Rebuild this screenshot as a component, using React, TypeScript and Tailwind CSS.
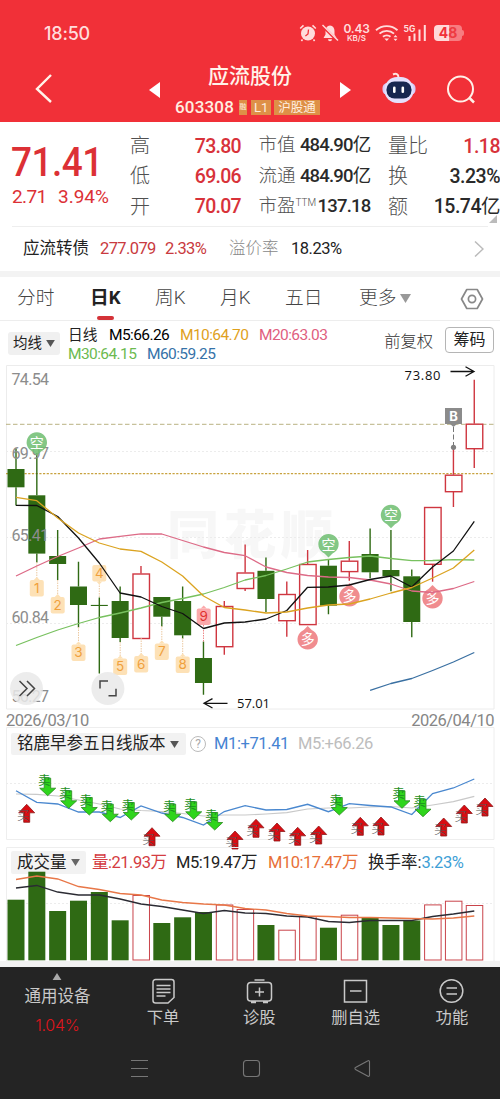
import React from 'react';
import clsx from 'clsx';

const COL = 20.83;
const cx = (i: number) => 16 + COL * i;

interface Candle {
  up?: boolean;
  top: number;
  bottom: number;
  high: number;
  low: number;
  vol: number;
}

const candles: Candle[] = [
  { top: 469, bottom: 487.3, high: 448.5, low: 505.5, vol: 898.7 },
  { top: 495.3, bottom: 553.6, high: 453, low: 562.6, vol: 870.7 },
  { top: 556, bottom: 564, high: 530, low: 580, vol: 910 },
  { top: 586.5, bottom: 605, high: 561.7, low: 627.5, vol: 899.7 },
  { top: 604.9, bottom: 606, high: 597.5, low: 673.5, vol: 891 },
  { top: 601, bottom: 638, high: 586.5, low: 642, vol: 919.3 },
  { up: true, top: 573.5, bottom: 638.5, high: 566, low: 638.5, vol: 894 },
  { top: 597, bottom: 616.7, high: 597, low: 626.5, vol: 922 },
  { top: 601, bottom: 635.3, high: 586.5, low: 638.7, vol: 916.3 },
  { top: 658, bottom: 683, high: 641.5, low: 694.7, vol: 911 },
  { up: true, top: 606, bottom: 646.7, high: 601, low: 654.7, vol: 903.5 },
  { up: true, top: 572.5, bottom: 588.5, high: 544.5, low: 591, vol: 908 },
  { top: 570.8, bottom: 599, high: 557.5, low: 612, vol: 924 },
  { up: true, top: 594, bottom: 620.7, high: 581.5, low: 636.7, vol: 928.7 },
  { up: true, top: 564, bottom: 624.6, high: 550, low: 624.6, vol: 915 },
  { top: 565.7, bottom: 605.7, high: 560, low: 614.3, vol: 926.7 },
  { up: true, top: 560.7, bottom: 571.6, high: 541, low: 580.7, vol: 913.7 },
  { top: 554, bottom: 572.3, high: 528.5, low: 578.3, vol: 916.7 },
  { top: 570, bottom: 576.3, high: 530, low: 591.3, vol: 924 },
  { top: 576.3, bottom: 622, high: 569.5, low: 637.3, vol: 919.5 },
  { up: true, top: 507, bottom: 564.3, high: 507, low: 581.7, vol: 903.4 },
  { up: true, top: 474.7, bottom: 491.7, high: 447.5, low: 507, vol: 899.7 },
  { up: true, top: 423.7, bottom: 448.7, high: 379.7, low: 468, vol: 904 },
];

const ma5 = [505.3, 505.5, 516.5, 538, 563, 593, 597, 606.5, 613.5, 628.5, 623, 622, 619, 610.5, 587.3, 587, 585, 579.5, 576, 587, 567, 551, 521.3];
const ma10 = [497.3, 500.7, 518, 533, 543, 549, 551.3, 562, 576, 596, 607.5, 610, 613, 612, 608, 605, 604, 599, 593, 587.5, 578, 568, 550];
const ma20 = [576, 566, 556.5, 548, 539, 536.3, 533.8, 534, 540.5, 547, 552.5, 555.7, 567, 572.5, 575.5, 577, 577.5, 580, 584, 591, 592.5, 588.5, 581.5];
const ma30 = [645.5, 637.5, 630, 623.5, 617.5, 613, 608, 602.5, 598.5, 594, 587.5, 580, 575.5, 569, 562, 559.5, 557.5, 556, 558.5, 560.7, 560.5, 559.7, 560];
const ma60 = [690.3, 683.5, 678.5, 670.5, 662, 652.5];

const signalM1 = [790.7, 802.3, 804, 812, 812, 817.5, 806, 813, 817.5, 825, 811.5, 805.7, 810, 809.5, 804.3, 811.7, 803.7, 805.5, 807, 814.5, 793.5, 788, 779];
const signalM5 = [794, 794.3, 796, 800, 804, 809, 810.5, 811.5, 813.5, 816, 815, 815, 814, 812.7, 809, 808, 808, 807, 806.5, 808, 805, 801.7, 796.3];

const volM5 = [887, 884.5, 891, 894, 894, 898, 903, 905.5, 909, 912.5, 909.5, 912, 912.5, 915, 916, 920.5, 921.5, 919.5, 919.5, 919.5, 915.5, 913, 910];
const volM10 = [878.5, 875, 878, 885.5, 888.5, 892.5, 894, 899, 901.5, 903, 904, 907.5, 909, 912.5, 915, 915.5, 916.5, 916.5, 917, 917.5, 918, 917, 915];

const sells = [[47.7, 795.7], [68.7, 808.3], [89.3, 815], [110.3, 821.7], [131.3, 820], [172.7, 821.7], [193.7, 819.3], [214.7, 830], [339.3, 815], [402, 808.3], [423, 816.7]];
const buys = [[26.7, 804.3], [152, 827.7], [235, 831], [256, 819.3], [277, 823], [297.7, 827.3], [318.7, 826], [360.3, 817.3], [381, 817], [443.7, 818], [464.3, 805], [485, 798]];

const counts = [
  { n: 1, x: 36.8, y: 587.5, from: 562 },
  { n: 2, x: 57.7, y: 604.5, from: 580 },
  { n: 3, x: 78.5, y: 652, from: 627 },
  { n: 4, x: 99.3, y: 572.5, from: 597, down: true },
  { n: 5, x: 120.2, y: 666, from: 642 },
  { n: 6, x: 141.2, y: 663.5, from: 638 },
  { n: 7, x: 161.8, y: 651, from: 626 },
  { n: 8, x: 182.7, y: 664, from: 638 },
];

const line = (ys: number[], start = 0) => ys.map((y, i) => `${cx(i + start).toFixed(1)},${y}`).join(' ');

const Caret = ({ className }: { className?: string }) => (
  <svg viewBox="0 0 10 8" className={clsx('shrink-0', className)} fill="currentColor">
    <path d="M0 0h10L5 8z" />
  </svg>
);

const StatusBar = () => (
  <div className="flex h-[66px] items-center pl-[44px] pr-[36px] text-[#ffdcdc] font-['Inter',sans-serif]">
    <span className="text-[18px] font-medium tracking-[-0.2px]">18:50</span>
    <div className="ml-auto flex items-center">
      <svg viewBox="0 0 18 18" className="h-[18px] w-[18px]">
        <circle cx="9" cy="9.5" r="7" fill="currentColor" />
        <path d="M1.2 4.5 4.5 1.4M16.8 4.5 13.5 1.4M3.5 15.5 2.4 17M14.5 15.5l1.1 1.5" stroke="currentColor" strokeWidth="1.6" />
        <path d="M9.5 5.5 9 10l-2.6 2" stroke="#f13038" strokeWidth="1.3" fill="none" />
      </svg>
      <svg viewBox="0 0 18 18" className="ml-[4px] h-[18px] w-[18px]">
        <path d="M9 1.5c-3 .3-4.5 2.7-4.5 5.5v3.5L2.5 14h13l-2-3.5V7C13.5 4 12 1.8 9 1.5zM7 15.2h4a2 2 0 0 1-4 0z" fill="currentColor" />
        <path d="M1 1.5 16.5 17" stroke="#f13038" strokeWidth="2.6" />
        <path d="M1.5 1 17 16.5" stroke="currentColor" strokeWidth="1.4" />
      </svg>
      <div className="ml-[4px] w-[27px] text-center font-semibold">
        <div className="text-[12px] leading-[10px] tracking-[-0.2px]">0.43</div>
        <div className="text-[8px] leading-[8px]">KB/S</div>
      </div>
      <svg viewBox="0 0 24 18" className="ml-[5px] h-[18px] w-[24px]" fill="none" stroke="currentColor" strokeWidth="1.9">
        <path d="M1 6.2c6-5.500 15.500-5.500 21.500 0M4.500 9.600c4-3.700 10.500-3.700 14.500 0M8 12.800c2-1.900 5.500-1.900 7.500 0" />
        <path d="M9.300 14.500h4.900L11.750 17z" fill="currentColor" stroke="none" />
        <path d="M18.500 13.200h4L20.500 11zM18.500 14.700h4l-2 2.200z" fill="currentColor" stroke="none" />
      </svg>
      <svg viewBox="0 0 23 18" className="ml-[5px] h-[18px] w-[23px] overflow-visible" stroke="currentColor" strokeWidth="2">
        <text x="-0.5" y="7.5" className="text-[8.500px] font-bold" fill="currentColor" stroke="none">5G</text>
        <path d="M5.500 17v-5M10.500 17V9.500M15.500 17V5.500M20.800 17V1" />
      </svg>
      <div className="ml-[7px] flex items-center">
        <div className="flex h-[16px] w-[28px] items-center justify-center rounded-[4px] bg-[linear-gradient(90deg,#ffd9d9_52%,#f77c80_52%)] text-[14px] font-bold leading-none">
          <span className="text-[#f13038]">4</span>
          <span className="text-[#ee3b42]">8</span>
        </div>
        <div className="h-[6px] w-[2px] rounded-r bg-[#f77c80]" />
      </div>
    </div>
  </div>
);

const TitleBar = () => (
  <div className="flex h-[56px] items-center pl-[35px] text-white">
    <svg viewBox="0 0 18 30" className="mt-[-13px] h-[30px] w-[18px]" fill="none" stroke="#fff4ea" strokeWidth="2.4">
      <path d="M16 2 2 16l14 13" />
    </svg>
    <svg viewBox="0 0 11 16" className="ml-[96px] mt-[-9px] h-[16px] w-[11px]" fill="#fff">
      <path d="M11 0v16L0 8z" />
    </svg>
    <div className="ml-[10px] flex w-[158px] flex-col items-center">
      <div className="pb-[9px] pl-[2px] text-[21px] font-medium leading-[19px] text-[#fff3ea]">应流股份</div>
      <div className="-mt-px mr-[3px] flex h-[28px] items-center whitespace-nowrap text-[#ffeee0]">
        <span className="text-[17px] font-medium tracking-[0.2px]">603308</span>
        <span className="ml-[5px] h-[15px] w-[8px] bg-[#de9047] text-center text-[7px] leading-[15px]">融</span>
        <span className="ml-[4px] h-[15px] w-[20px] bg-[#de9047] text-center text-[13px] leading-[15px]">L1</span>
        <span className="ml-[3px] h-[15px] w-[46px] bg-[#de9047] text-center text-[12.500px] leading-[15px]">沪股通</span>
      </div>
    </div>
    <svg viewBox="0 0 11 16" className="ml-[12px] mt-[-9px] h-[16px] w-[11px]" fill="#fff">
      <path d="M0 0v16l11-8z" />
    </svg>
    <svg viewBox="0 0 34 32" className="ml-[31px] mt-[-13px] h-[32px] w-[34px]">
      <path d="M11 2.500c3-1.500 5.500-.500 5.500 3" fill="none" stroke="#ffe3df" strokeWidth="2" />
      <rect x="0.500" y="11" width="33" height="12" rx="5" fill="#d9c9f7" />
      <rect x="2.500" y="5" width="29" height="26" rx="12.500" fill="#e4e0fc" />
      <rect x="4.500" y="9.500" width="25" height="17" rx="8" fill="#17264f" />
      <rect x="11" y="14.500" width="2.600" height="6.500" rx="1.300" fill="#fff" />
      <rect x="19.500" y="14.500" width="2.600" height="6.500" rx="1.300" fill="#fff" />
    </svg>
    <svg viewBox="0 0 30 30" className="ml-[30px] mt-[-8px] h-[30px] w-[30px]" fill="none" stroke="#fff1e8" strokeWidth="2">
      <circle cx="14.500" cy="14" r="12.500" />
      <path d="m23 22.500 5 5" strokeWidth="2.500" />
    </svg>
  </div>
);

const quotes = [
  [
    { label: '高', value: '73.80', red: true },
    { label: '低', value: '69.06', red: true },
    { label: '开', value: '70.07', red: true },
  ],
  [
    { label: '市值', value: '484.90', unit: '亿' },
    { label: '流通', value: '484.90', unit: '亿' },
    { label: '市盈', sup: 'TTM', value: '137.18' },
  ],
  [
    { label: '量比', value: '1.18', red: true },
    { label: '换', value: '3.23%' },
    { label: '额', value: '15.74', unit: '亿' },
  ],
];

const widths = ['w-[111px] text-[20px]', 'w-[112px] text-[18.5px]', 'w-[112px] text-[20px]'];
const valueSizes = ['text-[19.5px] tracking-[-0.7px]', 'text-[18.5px] tracking-[-0.8px]', 'text-[19.5px] tracking-[-0.5px]'];

const QuotePanel = () => (
  <div className="relative flex h-[104px] pt-[9px]">
    <div className="w-[130px] pl-[11px] text-[#dc3035]">
      <div className="origin-left scale-x-[0.9] whitespace-nowrap pt-[11px] text-[41px] font-medium leading-[40px] tracking-[-0.5px]">71.41</div>
      <div className="flex pl-px pt-[2px] text-[19px] leading-[26px]">
        <span className="w-[46px] tracking-[-0.6px]">2.71</span>
        <span>3.94%</span>
      </div>
    </div>
    <div className="flex gap-[17.500px]">
      {quotes.map((col, c) => (
        <div key={c} className={clsx('shrink-0', widths[c])}>
          {col.map((q) => (
            <div key={q.label} className="flex h-[30.300px] items-center justify-between whitespace-nowrap">
              <span className="flex font-light text-[#505050]">
                {q.label}
                {'sup' in q && <span className="mt-[3px] text-[10px] leading-[14px]">{q.sup}</span>}
              </span>
              <span className={clsx('font-medium', valueSizes[c], 'red' in q ? 'text-[#d8323a]' : 'text-[#2a2a2a]')}>
                {q.value}
                {'unit' in q && <span className="font-normal">{q.unit}</span>}
              </span>
            </div>
          ))}
        </div>
      ))}
    </div>
    <svg viewBox="0 0 8 8" className="absolute bottom-[3px] right-[3px] h-2 w-2" fill="#bbb">
      <path d="M8 0v8H0z" />
    </svg>
  </div>
);

const BondRow = () => (
  <div className="ml-[12px] mr-[12px] flex h-[45px] items-center border-t border-[#eee] pl-[11px] text-[16.500px]">
    <span className="w-[77px] text-[#222]">应流转债</span>
    <span className="w-[65px] tracking-[-0.600px] text-[#c93a40]">277.079</span>
    <span className="w-[64px] tracking-[-0.600px] text-[#c93a40]">2.33%</span>
    <span className="w-[62px] font-light text-[#888]">溢价率</span>
    <span className="tracking-[-0.500px] text-[#222]">18.23%</span>
    <svg viewBox="0 0 10 16" className="ml-auto mr-[4px] h-[16px] w-[10px]" fill="none" stroke="#bbb" strokeWidth="1.500">
      <path d="m1 0.500 8 7.500-8 7.500" />
    </svg>
  </div>
);

const Tabs = () => (
  <div className="flex h-[44px] items-center border-b border-[#ededed] pl-[17px] text-[18.700px] font-light text-[#444]">
    <span className="w-[73px]">分时</span>
    <span className="relative flex h-full w-[65px] items-center font-bold text-[#222]">
      日K
      <span className="absolute bottom-0 left-[7px] h-[4.500px] w-[17px] rounded-full bg-[#d43238]" />
    </span>
    <span className="w-[65px]">周K</span>
    <span className="w-[65px]">月K</span>
    <span className="w-[74px]">五日</span>
    <span>更多</span>
    <Caret className="ml-[4px] h-[9px] w-[11px] text-[#999]" />
    <svg viewBox="0 0 24 22" className="ml-auto mr-[16px] h-[22px] w-[24px]" fill="none" stroke="#888" strokeWidth="1.700" strokeLinejoin="round">
      <path d="M6.800 1.500h10.400L22.500 11l-5.300 9.500H6.800L1.500 11z" />
      <circle cx="12" cy="11" r="3.600" />
    </svg>
  </div>
);

const AverageLegend = () => (
  <div className="flex h-[44px] pl-[8px] pr-[6px] text-[#222]">
    <div className="mt-[11px] flex h-[23px] w-[52px] items-center gap-[4px] rounded-[3px] bg-[#f0f0f0] pl-[5px] text-[14.500px]">
      均线
      <Caret className="h-[7px] w-[9px] text-[#555]" />
    </div>
    <div className="ml-[8px] pt-[5px] text-[15.500px] leading-[19px] tracking-[-0.600px]">
      <div className="flex">
        <span className="w-[41px] text-[14.700px] tracking-normal">日线</span>
        <span className="w-[71px] text-black">M5:66.26</span>
        <span className="w-[79px] text-[#dfa11c]">M10:64.70</span>
        <span className="text-[#e06080]">M20:63.03</span>
      </div>
      <div className="flex">
        <span className="w-[79px] text-[#6cba50]">M30:64.15</span>
        <span className="text-[#3572a8]">M60:59.25</span>
      </div>
    </div>
    <span className="ml-auto pt-[10px] text-[16.300px] font-light leading-[22px] text-[#333]">前复权</span>
    <span className="ml-[12px] mt-[6px] flex h-[26px] w-[49px] items-center justify-center rounded-[4px] border border-[#b5b5b5] text-[16px]">筹码</span>
  </div>
);

const Pin = ({ x, y, up, children }: { x: number; y: number; up?: boolean; children: React.ReactNode }) => (
  <g>
    <g fill={up ? '#ee7c80' : '#72bf74'} fillOpacity="0.880">
      <path d={up ? `M${x - 4} ${y - 9} L${x} ${y - 13} L${x + 4} ${y - 9} A10.200 10.200 0 1 1 ${x - 4} ${y - 9}z` : `M${x - 4} ${y + 9} L${x} ${y + 13} L${x + 4} ${y + 9} A10.200 10.200 0 1 0 ${x - 4} ${y + 9}z`} />
    </g>
    <text x={x} y={y + 5} textAnchor="middle" className="text-[14px]" fill="#fff">{children}</text>
  </g>
);

const CountTag = ({ x, y, n, down, red }: { x: number; y: number; n: number; down?: boolean; red?: boolean }) => (
  <g>
    <rect x={x - 7} y={y - 7.5} width="14" height="16.5" rx="2" fill={red ? '#fba9ab' : '#fde1b6'} />
    <path d={down ? `M${x - 3} ${y + 9}h6l-3 3z` : `M${x - 3} ${y - 7.5}h6l-3-3z`} fill={red ? '#fba9ab' : '#fde1b6'} />
    <text x={x} y={y + 5.3} textAnchor="middle" className="font-['Inter'] text-[13.500px]" fill={red ? '#e03030' : '#f0a03c'}>{n}</text>
  </g>
);

const priceLabels = [
  { text: '74.54', y: 385 },
  { text: '69.97', y: 459 },
  { text: '65.41', y: 541 },
  { text: '60.84', y: 623 },
  { text: '56.27', y: 701.5 },
];

const PriceChart = () => (
  <svg viewBox="0 365 500 345" className="block h-[345px] w-[500px]" fill="none">
    <text x="167" y="554" textLength="166" className="text-[52px] font-black" fill="#f7f7f7">同花顺</text>
    <path d="M6.500 365.500h487.500v343.500H6.500z" stroke="#ececec" />
    <path d="M6 451.500h488M6 537.500h488M6 623.500h488" stroke="#ececec" strokeDasharray="2 2" />
    <path d="M6 424.300h488" stroke="#b9b283" strokeDasharray="4.500 2.500" />
    <path d="M6 473.700h488" stroke="#c8a23e" strokeWidth="1.300" strokeDasharray="2.200 1.500" />

    {candles.map((c, i) => {
      const color = c.up ? '#cf3640' : '#2f6a14';
      return (
        <g key={i} stroke={color} strokeWidth="1.4">
          <path d={`M${cx(i)} ${c.high}V${c.top}M${cx(i)} ${c.bottom}V${c.low}`} />
          <rect
            x={cx(i) - (c.up ? 8 : 8.5)}
            y={c.up ? c.top + 0.5 : c.top}
            width={c.up ? 16.5 : 17}
            height={c.bottom - c.top - (c.up ? 0.5 : 0)}
            fill={c.up ? '#fff' : color}
            stroke={c.up ? color : 'none'}
          />
        </g>
      );
    })}

    {counts.map((c) => (
      <path key={c.n} d={`M${c.x} ${c.from}V${c.y}`} stroke="#ecc9a0" strokeDasharray="1.500 1" />
    ))}
    <path d="M203.500 625v17" stroke="#e88" strokeDasharray="1.500 1" />
    {counts.map((c) => <CountTag key={c.n} {...c} />)}
    <CountTag x={203.7} y={616} n={9} red />

    {priceLabels.map((p) => (
      <text key={p.text} x="11.500" y={p.y} textLength="37.500" className="text-[16px]" fill="#8c8c8c">{p.text}</text>
    ))}

    <Pin x={36.8} y={442.8}>空</Pin>
    <Pin x={328.5} y={544.5}>空</Pin>
    <Pin x={391} y={515.3}>空</Pin>
    <Pin x={307.7} y={639} up>多</Pin>
    <Pin x={349.5} y={596} up>多</Pin>
    <Pin x={432.5} y={598} up>多</Pin>

    <g strokeWidth="1.3" strokeLinejoin="round">
      <polyline points={line(ma20)} stroke="#dd6b87" />
      <polyline points={line(ma30)} stroke="#78c15f" />
      <polyline points={line(ma60, 17)} stroke="#3a70a2" />
      <polyline points={line(ma5)} stroke="#111" />
      <polyline points={line(ma10)} stroke="#dba320" />
    </g>

    <path d="M445 408h17v16h-5l-3.500 3-3.500-3h-5z" fill="#8b8b8b" />
    <text x="453.500" y="421.200" textAnchor="middle" className="font-['Inter'] text-[13px] font-bold" fill="#fff">B</text>
    <path d="M453.500 427v18" stroke="#777" strokeDasharray="5 2.500" />
    <circle cx="453.500" cy="447.300" r="2.600" fill="#808080" />

    <text x="404.500" y="379.500" textLength="36" className="font-['Open_Sans'] text-[13px]" fill="#111">73.80</text>
    <path d="M450.500 371.500h23.500M465.500 366.800l8.500 4.700-8.500 4.700" stroke="#111" strokeWidth="1.300" />
    <text x="237" y="707.500" textLength="33" className="font-['Open_Sans'] text-[13px]" fill="#111">57.01</text>
    <path d="M227.500 703.300h-23.500M212.500 698.600l-8.500 4.700 8.500 4.700" stroke="#111" strokeWidth="1.300" />

    <g fill="#e9e9e9" fillOpacity="0.850">
      <circle cx="26.500" cy="688.500" r="16.500" />
      <circle cx="107.900" cy="688.500" r="16.500" />
    </g>
    <path d="m19.500 681 7.500 7.500-7.500 7.500M27 681l7.500 7.500L27 696M100 688.500v-7.500h8M108.500 695.800h7.500v-7" stroke="#444" strokeWidth="1.500" />
  </svg>
);

const SignalPanel = () => (
  <div className="h-[120px]">
    <div className="flex h-[32px] items-center pl-[11px] pt-[2px] text-[16.500px] tracking-[-0.400px]">
      <div className="flex h-[22px] w-[175px] items-center gap-[4px] rounded-[2px] bg-[#f2f2f2] pl-[6px] tracking-normal text-[#222]">
        铭鹿早参五日线版本
        <Caret className="h-[7px] w-[9px] text-[#555]" />
      </div>
      <span className="ml-[4px] flex h-[16px] w-[16px] items-center justify-center rounded-full border border-[#bbb] text-[12px] text-[#aaa]">?</span>
      <span className="ml-[8px] w-[84px] text-[#4583d2]">M1:+71.41</span>
      <span className="text-[#bdbdbd]">M5:+66.26</span>
    </div>
    <svg viewBox="0 759 500 88" className="block h-[88px] w-[500px] overflow-visible" fill="none">
      <path d="M6.500 839.500V727.500h487.500v112z" stroke="#eee" />
      <path d="M6 783.500h488" stroke="#ececec" strokeDasharray="2 2" />
      <polyline points={line(signalM5)} stroke="#c9c9c9" strokeWidth="1.200" />
      <polyline points={line(signalM1)} stroke="#4a88cf" strokeWidth="1.300" />
      {sells.map(([x, y]) => (
        <g key={x}>
          <path d={`M${x} ${y}l-8-7.500h4.500v-10h6.500v10h5z`} fill="#2fd51c" stroke="#2b8a20" strokeWidth="0.8" />
          <text x={x - 3.5} y={y - 10.5} textAnchor="middle" className="text-[12.500px]" fill="#1d8f22">卖</text>
        </g>
      ))}
      {buys.map(([x, y]) => (
        <g key={x}>
          <path d={`M${x} ${y}l-8 8.500h5v9.500h6v-9.500h5z`} fill="#d90c12" stroke="#8e1a1a" strokeWidth="0.8" />
          <text x={x - 3.5} y={y + 16} textAnchor="middle" className="text-[12.500px] font-light" fill="#555">买</text>
        </g>
      ))}
    </svg>
  </div>
);

const VolumePanel = () => (
  <div className="h-[114px]">
    <div className="flex h-[24px] items-end pl-[11px] text-[16.500px] leading-[24px] tracking-[-0.500px]">
      <div className="mb-[-3px] flex h-[23px] w-[75px] items-center gap-[4px] rounded-[2px] bg-[#f2f2f2] pl-[6px] tracking-normal text-[#222]">
        成交量
        <Caret className="h-[7px] w-[9px] text-[#666]" />
      </div>
      <div className="mb-[-4px] ml-[6px] flex whitespace-nowrap">
        <span className="w-[84px] text-[#d43c42]">量:21.93万</span>
        <span className="w-[92px] text-[#222]">M5:19.47万</span>
        <span className="w-[100px] text-[#e87038]">M10:17.47万</span>
        <span className="tracking-normal text-[#222]">换手率:</span>
        <span className="text-[#3e9fd6]">3.23%</span>
      </div>
    </div>
    <svg viewBox="0 870 500 90" className="block h-[90px] w-[500px] overflow-visible" fill="none">
      <path d="M6.500 960V846.500h487.500V960" stroke="#eee" />
      <path d="M6 902.500h488" stroke="#ececec" strokeDasharray="2 2" />
      {candles.map((c, i) => (
        <rect
          key={i}
          x={cx(i) - (c.up ? 8 : 8.5)}
          y={c.vol + (c.up ? 0.5 : 0)}
          width={c.up ? 16.5 : 17}
          height={959.3 - c.vol - (c.up ? 0.8 : 0)}
          fill={c.up ? '#fff' : '#2f6a14'}
          stroke={c.up ? '#c9444b' : 'none'}
        />
      ))}
      <polyline points={line(volM5)} stroke="#2b2b33" strokeWidth="1.300" />
      <polyline points={line(volM10)} stroke="#e87748" strokeWidth="1.300" />
    </svg>
  </div>
);

const actions = [
  {
    label: '下单',
    icon: <path d="M5.500 1.500h16a2.500 2.500 0 0 1 2.500 2.500v15.500l-6 5.500H5.500A2.500 2.500 0 0 1 3 22.500V4a2.500 2.500 0 0 1 2.500-2.500zM6.500 7.500h14M6.500 11h14M6.500 14.500h14M6.500 18h9" />,
  },
  {
    label: '诊股',
    icon: <path d="M4.500 4.500h18a3 3 0 0 1 3 3V20a3 3 0 0 1-3 3h-18a3 3 0 0 1-3-3V7.500a3 3 0 0 1 3-3zM8.500 2h10M13.500 9.500v9M9 14h9M5 24.500h5M17 24.500h5" />,
  },
  { label: '删自选', icon: <path d="M2.500 2.500h22v21.500h-22zM8 13h11.500" /> },
  {
    label: '功能',
    icon: (
      <>
        <circle cx="13.500" cy="13" r="11.300" />
        <path d="M8.500 10h10.500M8.500 16h10.500" />
      </>
    ),
  },
];

const BottomBar = () => (
  <div className="h-[133px] bg-[#242424] text-[#c9c9c9]">
    <div className="flex h-[72px]">
      <div className="flex w-[115px] flex-col items-center pt-[6px]">
        <Caret className="h-[7px] w-[12px] rotate-180 text-[#aaa]" />
        <span className="mt-[5px] text-[16.500px] leading-[24px]">通用设备</span>
        <span className="mt-[4px] font-['Inter'] text-[16px] font-light leading-[24px] tracking-[-0.300px] text-[#e0141c]">1.04%</span>
      </div>
      {actions.map((a) => (
        <div key={a.label} className="flex w-[96.300px] flex-col items-center pt-[10.500px]">
          <svg viewBox="0 0 27 27" className="h-[27px] w-[27px]" fill="none" stroke="#c9c9c9" strokeWidth="1.500">
            {a.icon}
          </svg>
          <span className="mt-px text-[16.300px] leading-[24px]">{a.label}</span>
        </div>
      ))}
    </div>
    <div className="flex items-center pl-[130px] pt-[20px]">
      {[
        <path key="menu" d="M1 1.500h17M1 9.500h17M1 17.500h17" />,
        <rect key="home" x="1.500" y="1.500" width="16" height="16" rx="3" />,
        <path key="back" d="M16.500 2.500v14a1 1 0 0 1-1.500.700L2.500 10.400a1 1 0 0 1 0-1.800L15 1.800a1 1 0 0 1 1.500.700z" />,
      ].map((shape, i) => (
        <svg key={i} viewBox="0 0 19 19" className="mr-[92.500px] h-[19px] w-[19px]" fill="none" stroke="#777" strokeWidth="1.100">
          {shape}
        </svg>
      ))}
    </div>
  </div>
);

const App = () => (
  <div className="h-[1099px] w-[500px] overflow-hidden bg-white font-['Roboto','Noto_Sans_CJK_SC',sans-serif]" lang="zh-CN">
    <header className="h-[122px] bg-[#f13038]">
      <StatusBar />
      <TitleBar />
    </header>
    <QuotePanel />
    <BondRow />
    <div className="h-[6px] bg-[#f3f3f3]" />
    <Tabs />
    <AverageLegend />
    <PriceChart />
    <div className="flex h-[17px] items-center justify-between pl-[6px] pr-[6px] pt-[3px] text-[16.500px] leading-[17px] tracking-[-0.500px] text-[#868686]">
      <span>2026/03/10</span>
      <span>2026/04/10</span>
    </div>
    <SignalPanel />
    <VolumePanel />
    <div className="h-[6px] bg-[#f3f3f3]" />
    <BottomBar />
  </div>
);

export default App;
